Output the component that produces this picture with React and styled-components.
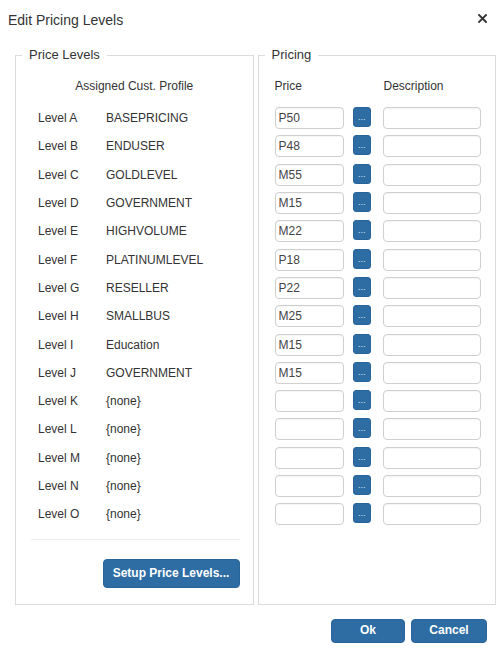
import React from "react";
import styled, { createGlobalStyle } from "styled-components";

const Global = createGlobalStyle`
  html, body { margin: 0; padding: 0; background: #fff; }
  body { font-family: "Liberation Sans", Arial, sans-serif; color: #333; }
  * { box-sizing: border-box; }
`;

const Dialog = styled.div`
  width: 500px;
  height: 657px;
  background: #fff;
  display: flex;
  flex-direction: column;
`;

const Header = styled.div`
  display: flex;
  justify-content: space-between;
  align-items: flex-start;
  padding: 12px 13px 0 8px;
  height: 47px;
`;

const Title = styled.div`
  font-size: 14px;
  line-height: 16px;
  color: #333;
`;

const Close = styled.svg`
  width: 9px;
  height: 9px;
  margin-top: 2px;
`;

const Panels = styled.div`
  display: flex;
  gap: 4px;
  padding: 0 4px 0 15px;
`;

const Group = styled.fieldset`
  flex: 1;
  min-width: 0;
  margin: 0;
  padding: 0 0 16px 0;
  border: 1px solid #dcdcdc;
  display: flex;
  flex-direction: column;
`;

const Legend = styled.legend`
  margin-left: 6px;
  padding: 0 7px;
  font-size: 13px;
  line-height: 16px;
  color: #333;
`;

const Inner = styled.div`
  padding: 15px ${(p) => p.$right}px 0 ${(p) => p.$left}px;
  display: flex;
  flex-direction: column;
`;

const HeadRow = styled.div`
  display: grid;
  grid-template-columns: ${(p) => p.$cols};
  font-size: 12px;
  line-height: 16px;
  margin-bottom: 10px;
  color: #333;
  text-align: ${(p) => p.$align || "left"};
`;

const LevelRow = styled.div`
  display: grid;
  grid-template-columns: 68px 1fr;
  height: 28.3px;
  align-items: center;
  font-size: 12px;
  padding-left: 7px;
  color: #333;
`;

const PriceRow = styled.div`
  display: flex;
  height: 28.3px;
  align-items: flex-start;
  padding-top: 3.2px;
`;

const Input = styled.input`
  width: ${(p) => p.$w}px;
  height: 22px;
  border: 1px solid #cfcfcf;
  border-radius: 4px;
  padding: 0 3px;
  font-family: "Liberation Sans", Arial, sans-serif;
  font-size: 12px;
  color: #444;
  background: #fff;
  outline: none;
  box-shadow: inset 0 1px 1px rgba(0, 0, 0, 0.04);
`;

const DotsButton = styled.button`
  width: 19px;
  height: 20px;
  margin: 0 12px 0 9px;
  padding: 0;
  border: 1px solid #2a659a;
  border-radius: 3px;
  background: #2e6da4;
  color: #dfe8f1;
  font-family: "Liberation Sans", Arial, sans-serif;
  font-size: 9px;
  line-height: 14px;
  display: flex;
  align-items: center;
  justify-content: center;
`;

const Separator = styled.div`
  height: 1px;
  background: #ececec;
  margin-top: 10.65px;
`;

const BlueButton = styled.button`
  height: ${(p) => p.$h}px;
  width: ${(p) => p.$w}px;
  padding: 0;
  border: 1px solid #2a659a;
  border-radius: 4px;
  background: #2e6da4;
  color: #fff;
  font-family: "Liberation Sans", Arial, sans-serif;
  font-size: 12px;
  font-weight: bold;
  line-height: 1;
  padding-bottom: 2px;
`;

const SetupWrap = styled.div`
  display: flex;
  justify-content: flex-end;
  margin-top: 19px;
`;

const Footer = styled.div`
  display: flex;
  justify-content: flex-end;
  gap: 6px;
  padding: 0 13px 0 0;
  margin-top: 14px;
`;

const levels = [
  ["Level A", "BASEPRICING", "P50"],
  ["Level B", "ENDUSER", "P48"],
  ["Level C", "GOLDLEVEL", "M55"],
  ["Level D", "GOVERNMENT", "M15"],
  ["Level E", "HIGHVOLUME", "M22"],
  ["Level F", "PLATINUMLEVEL", "P18"],
  ["Level G", "RESELLER", "P22"],
  ["Level H", "SMALLBUS", "M25"],
  ["Level I", "Education", "M15"],
  ["Level J", "GOVERNMENT", "M15"],
  ["Level K", "{none}", ""],
  ["Level L", "{none}", ""],
  ["Level M", "{none}", ""],
  ["Level N", "{none}", ""],
  ["Level O", "{none}", ""],
];

export default function App() {
  return (
    <>
      <Global />
      <Dialog>
        <Header>
          <Title>Edit Pricing Levels</Title>
          <Close viewBox="0 0 9 9">
            <path d="M1 1 L8 8 M8 1 L1 8" stroke="#333" strokeWidth="1.9" strokeLinecap="square" />
          </Close>
        </Header>
        <Panels>
          <Group>
            <Legend>Price Levels</Legend>
            <Inner $left={15} $right={13}>
              <HeadRow $cols="1fr" $align="center" style={{ marginLeft: -15, marginRight: -13 }}>
                <span>Assigned Cust. Profile</span>
              </HeadRow>
              {levels.map(([l, n]) => (
                <LevelRow key={l}>
                  <span>{l}</span>
                  <span>{n}</span>
                </LevelRow>
              ))}
              <Separator />
              <SetupWrap>
                <BlueButton $w={137} $h={29}>Setup Price Levels...</BlueButton>
              </SetupWrap>
            </Inner>
          </Group>
          <Group>
            <Legend>Pricing</Legend>
            <Inner $left={16} $right={14}>
              <HeadRow $cols="109px 1fr">
                <span>Price</span>
                <span>Description</span>
              </HeadRow>
              {levels.map(([l, , p]) => (
                <PriceRow key={l}>
                  <Input $w={69} defaultValue={p} />
                  <DotsButton>...</DotsButton>
                  <Input $w={98} defaultValue="" />
                </PriceRow>
              ))}
            </Inner>
          </Group>
        </Panels>
        <Footer>
          <BlueButton $w={74} $h={24}>Ok</BlueButton>
          <BlueButton $w={76} $h={24}>Cancel</BlueButton>
        </Footer>
      </Dialog>
    </>
  );
}
